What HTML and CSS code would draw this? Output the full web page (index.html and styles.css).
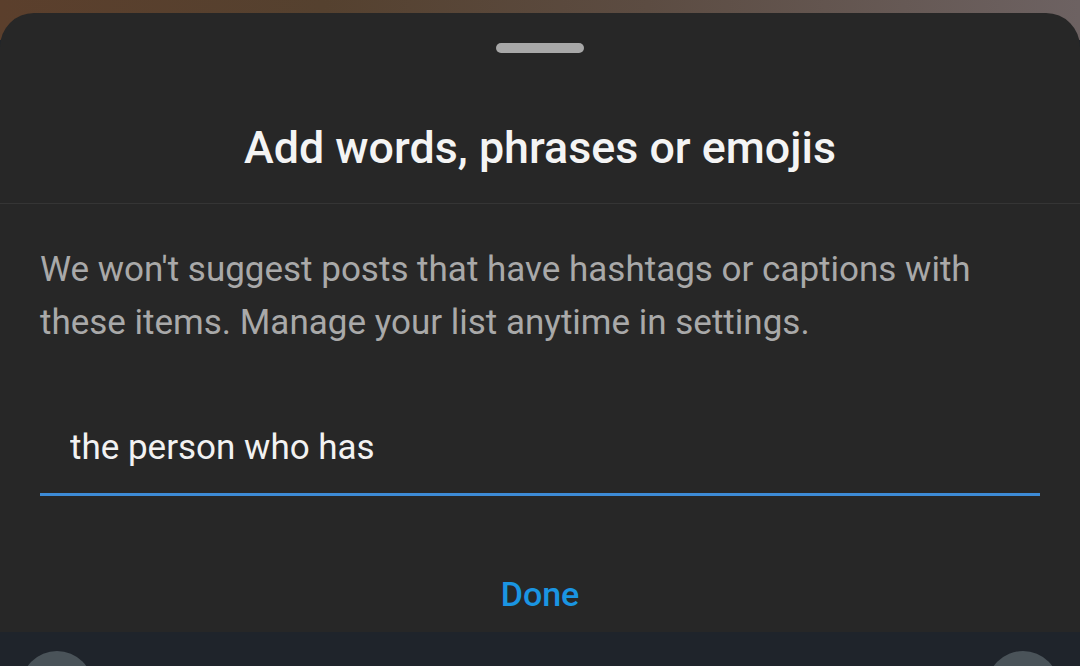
FILE: index.html
```html
<!DOCTYPE html>
<html lang="en">
<head>
	<meta charset="UTF-8">
	<meta name="viewport" content="width=device-width, initial-scale=1.0">
	<title>Add words</title>

	<link rel="stylesheet" href="styles.css">
</head>
<body>
	<div class="screen">
		<div class="backdrop"></div>

		<div class="sheet">
			<div class="handle"></div>

			<div class="header">
				<h1>Add words, phrases or emojis</h1>
			</div>

			<div class="body">
				<p class="hint">We won't suggest posts that have hashtags or captions with these items. Manage your list anytime in settings.</p>

				<div class="field">
					<input type="text" id="wordInput" value="the person who has">
				</div>

				<button type="button" class="done">Done</button>
			</div>
		</div>

		<div class="keyboard">
			<div class="key-round"></div>
			<div class="key-round"></div>
		</div>
	</div>
</body>
</html>
```

FILE: styles.css
```css
		html, body {
			margin: 0;
			padding: 0;
		}
		body {
			background: #1f242b;
			font-family: Roboto, "Liberation Sans", sans-serif;
			overflow: hidden;
		}
		.screen {
			width: 1080px;
			height: 666px;
			display: flex;
			flex-direction: column;
			background: #1f242b;
		}
		.backdrop {
			height: 40px;
			margin-bottom: -27px;
			background: linear-gradient(90deg, #5b3f2c 0%, #55412f 30%, #5c4c42 60%, #6d6262 100%);
		}
		.sheet {
			height: 619px;
			background: #272727;
			border-radius: 34px 34px 0 0;
			display: flex;
			flex-direction: column;
			align-items: center;
		}
		.sheet .handle {
			width: 88px;
			height: 10px;
			margin-top: 30px;
			border-radius: 5px;
			background: #a8a8a8;
		}
		.sheet .header {
			align-self: stretch;
			box-sizing: border-box;
			height: 151px;
			padding-top: 40px;
			border-bottom: 1px solid #353535;
			display: flex;
			align-items: center;
			justify-content: center;
		}
		.sheet .header h1 {
			margin: 0;
			color: #f4f4f4;
			font-size: 44.8px;
			font-weight: 500;
			line-height: 52px;
		}
		.sheet .body {
			align-self: stretch;
			padding: 0 40px;
			display: flex;
			flex-direction: column;
		}
		.sheet .hint {
			margin: 39px 0 0;
			color: #a9a9a9;
			font-size: 35px;
			line-height: 53px;
		}
		.sheet .field {
			margin-top: 79px;
			border-bottom: 3px solid #3d8bd6;
		}
		.sheet .field input {
			display: block;
			width: 100%;
			box-sizing: border-box;
			padding: 0 30px 25px;
			border: none;
			outline: none;
			background: transparent;
			color: #f2f2f2;
			font-family: Roboto, "Liberation Sans", sans-serif;
			font-size: 35px;
			line-height: 40px;
		}
		.sheet .done {
			align-self: center;
			margin-top: 78px;
			padding: 0;
			border: none;
			background: transparent;
			color: #1a95e2;
			font-family: Roboto, "Liberation Sans", sans-serif;
			font-size: 34px;
			font-weight: 500;
			line-height: 40px;
		}
		.keyboard {
			flex: 1;
			display: flex;
			justify-content: space-between;
			padding: 19px 21px 0 21px;
			overflow: hidden;
		}
		.keyboard .key-round {
			width: 72px;
			height: 72px;
			border-radius: 50%;
			background: #4a5359;
			flex-shrink: 0;
		}
```
